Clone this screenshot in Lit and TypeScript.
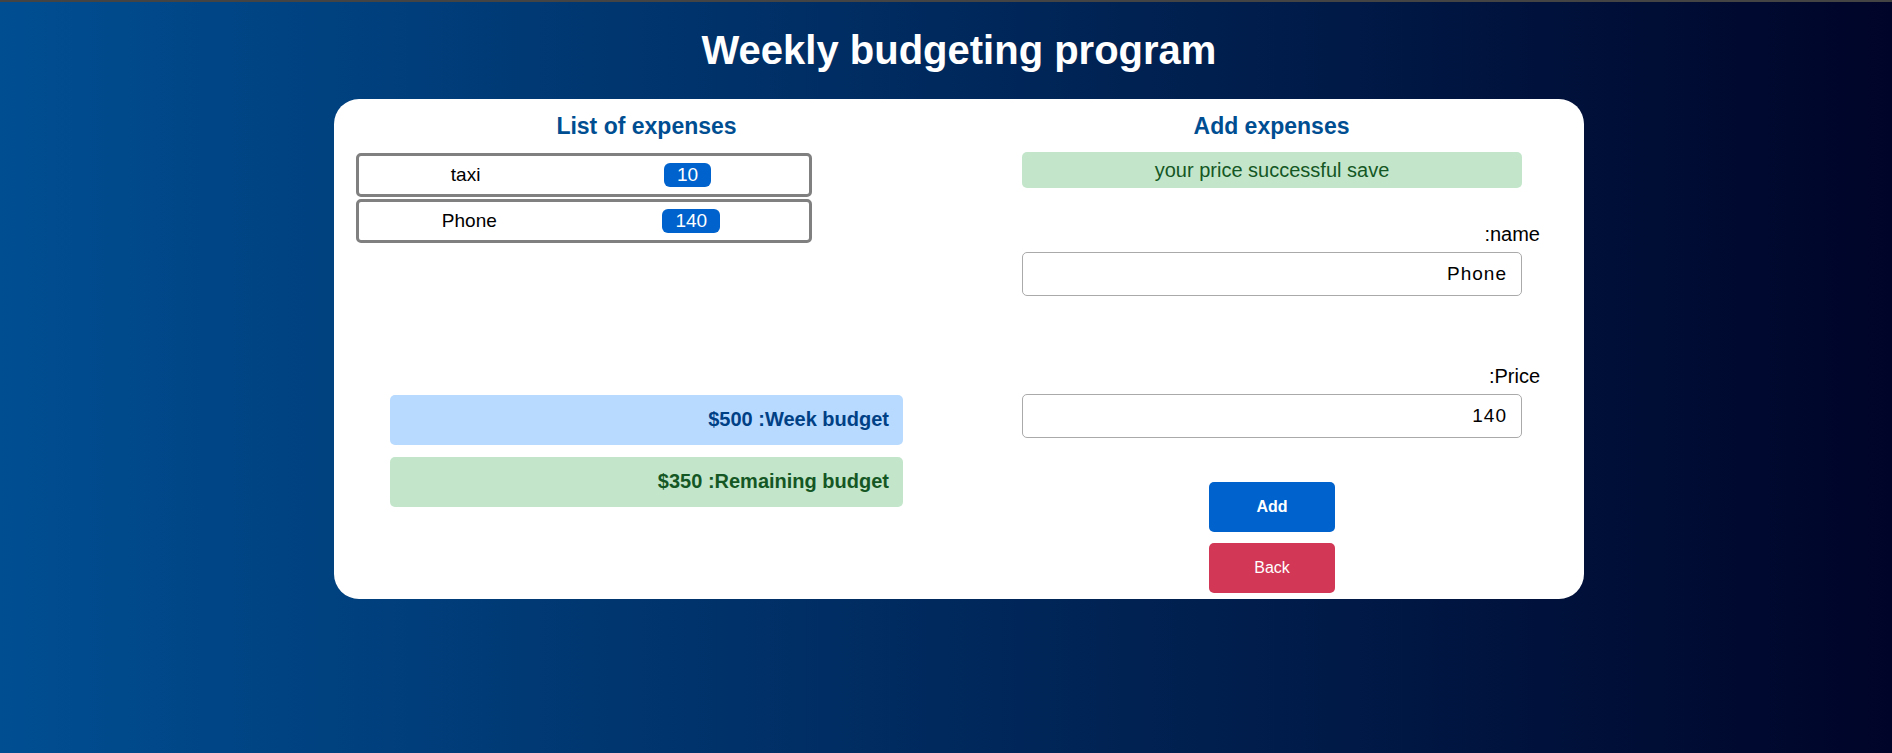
import { LitElement, html, css } from "lit";
import { customElement, state } from "lit/decorators.js";

interface Expense {
  name: string;
  price: number;
}

@customElement("app-root")
export class AppRoot extends LitElement {
  static styles = css`
    :host {
      display: block;
      box-sizing: border-box;
      min-height: 100vh;
      border-top: 2px solid #444;
      background: linear-gradient(to left, #000428, #004e92) border-box;
      font-family: "Liberation Sans", Arial, sans-serif;
      font-size: 20px;
      line-height: 24px;
      color: #000;
    }
    * {
      box-sizing: border-box;
    }
    .page {
      display: flex;
      flex-direction: column;
      align-items: center;
      gap: 24px;
      padding: 24px 0 24px 26px;
    }
    h1,
    h2,
    ul {
      margin: 0;
      padding: 0;
    }
    h1 {
      color: #fff;
      font-size: 40px;
      line-height: 49px;
    }
    h2 {
      color: #004e92;
      font-size: 23px;
      line-height: 28px;
      text-align: center;
    }
    .card {
      display: grid;
      grid-template-columns: 1fr 1fr;
      width: 100%;
      max-width: 1250px;
      min-height: 500px;
      border-radius: 25px;
      background: #fff;
    }
    .column {
      display: flex;
      flex-direction: column;
      padding-top: 13px;
    }
    .list {
      display: flex;
      flex-direction: column;
      gap: 2px;
      min-height: 230px;
      margin: 13px 0 12px 22px;
      list-style: none;
      font-size: 19px;
    }
    .item {
      display: flex;
      justify-content: space-around;
      align-items: center;
      width: 456px;
      max-width: 100%;
      height: 44px;
      border: 3px solid #808080;
      border-radius: 5px;
    }
    .badge {
      margin-right: 6px;
      padding: 0 13px;
      border-radius: 6px;
      background: #0062cc;
      color: #fff;
    }
    .budgets {
      display: flex;
      flex-direction: column;
      gap: 12px;
      margin: 0 56px;
    }
    .budget {
      padding: 12px 14px 14px;
      border-radius: 5px;
      font-weight: bold;
      text-align: right;
    }
    .total {
      background: #b8daff;
      color: #004085;
    }
    .good {
      background: #c3e6cb;
      color: #155724;
    }
    .form {
      display: flex;
      flex-direction: column;
      padding: 12px 62px 0 63px;
    }
    .notice {
      padding: 6px;
      border-radius: 5px;
      text-align: center;
    }
    .field {
      display: flex;
      flex-direction: column;
      gap: 6px;
      padding-top: 34px;
      padding-bottom: 44px;
    }
    .field + .field {
      padding-top: 24px;
    }
    label {
      margin-right: -18px;
      text-align: right;
    }
    input {
      width: 100%;
      height: 44px;
      padding: 0 14px;
      border: 1px solid #aaa;
      border-radius: 5px;
      background: #fff;
      color: #000;
      font: inherit;
      font-size: 19px;
      letter-spacing: 1px;
      text-align: right;
    }
    .actions {
      display: flex;
      flex-direction: column;
      align-items: center;
      gap: 11px;
      padding-bottom: 6px;
    }
    button {
      width: 126px;
      height: 50px;
      border: 0;
      border-radius: 5px;
      color: #fff;
      font-family: inherit;
      font-size: 16px;
      cursor: pointer;
    }
    .add {
      background: #0062cc;
      font-weight: bold;
    }
    .back {
      background: #d23755;
    }
  `;

  @state() private budget = 500;
  @state() private expenses: Expense[] = [
    { name: "taxi", price: 10 },
    { name: "Phone", price: 140 },
  ];

  private get remaining() {
    return this.budget - this.expenses.reduce((sum, e) => sum + e.price, 0);
  }

  private add(event: Event) {
    event.preventDefault();
    const data = new FormData(event.target as HTMLFormElement);
    const name = String(data.get("name") ?? "").trim();
    const price = Number(data.get("price"));
    if (name && price > 0) {
      this.expenses = [...this.expenses, { name, price }];
    }
  }

  private back() {
    this.expenses = this.expenses.slice(0, -1);
  }

  render() {
    return html`
      <main class="page">
        <h1>Weekly budgeting program</h1>
        <div class="card">
          <section class="column">
            <h2>List of expenses</h2>
            <ul class="list">
              ${this.expenses.map(
                (e) => html`<li class="item">
                  <span>${e.name}</span><span class="badge">${e.price}</span>
                </li>`
              )}
            </ul>
            <div class="budgets">
              <div class="budget total">$${this.budget} :Week budget</div>
              <div class="budget good">$${this.remaining} :Remaining budget</div>
            </div>
          </section>
          <section class="column">
            <h2>Add expenses</h2>
            <form class="form" @submit=${this.add}>
              <div class="notice good" role="status">your price successful save</div>
              <div class="field">
                <label for="name">:name</label>
                <input id="name" name="name" type="text" value="Phone" />
              </div>
              <div class="field">
                <label for="price">:Price</label>
                <input id="price" name="price" type="text" inputmode="numeric" value="140" />
              </div>
              <div class="actions">
                <button class="add" type="submit">Add</button>
                <button class="back" type="button" @click=${this.back}>Back</button>
              </div>
            </form>
          </section>
        </div>
      </main>
    `;
  }
}
